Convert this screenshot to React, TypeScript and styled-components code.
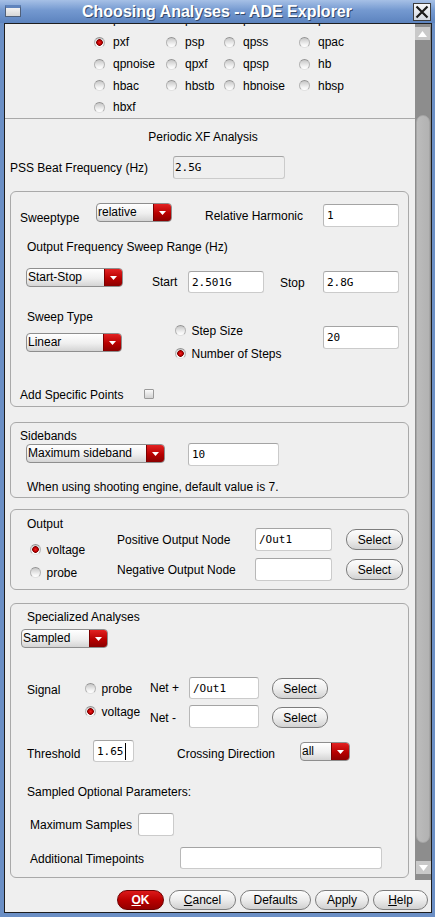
import { createGlobalStyle, styled } from "styled-components";

const GlobalStyle = createGlobalStyle`
  html, body {
    margin: 0;
    padding: 0;
  }
  body {
    font-family: "Liberation Sans", Arial, sans-serif;
    font-size: 12px;
    color: #000;
    background: #6a8ec4;
  }
`;

type Pos = { $w?: number; $mt?: number; $ml?: number };

const Window = styled.div`
  width: 435px;
  height: 917px;
  display: flex;
  flex-direction: column;
  background: #6b8fc5;
  box-sizing: border-box;
`;

const TitleBar = styled.div`
  height: 23px;
  flex-shrink: 0;
  display: flex;
  align-items: center;
  padding: 0 4px 0 5px;
  background: linear-gradient(#a6c0e6 0%, #7499d0 45%, #5c83be 100%);
`;

const TitleIcon = styled.div`
  width: 16px;
  height: 12px;
  box-sizing: border-box;
  border: 1px solid #50607a;
  border-top: 3px solid #5f84bd;
  background: linear-gradient(#f2f2f2, #d6d6d6);
  margin-top: -1px;
`;

const TitleText = styled.div`
  flex: 1;
  text-align: center;
  color: #fff;
  font-weight: bold;
  font-size: 16px;
  text-shadow: 1px 1px 0 #34496b;
  white-space: nowrap;
`;

const CloseButton = styled.div`
  width: 18px;
  height: 18px;
  box-sizing: border-box;
  border: 1px solid #3c3c3c;
  background: linear-gradient(#f6f7f9, #d3d9e2);
  display: flex;
  align-items: center;
  justify-content: center;
`;

const Body = styled.div`
  flex: 1;
  margin: 0 3px 4px 4px;
  border: 1px solid #1e1e1e;
  background: #efefef;
  display: flex;
  flex-direction: column;
  overflow: hidden;
`;

const Main = styled.div`
  height: 856px;
  flex-shrink: 0;
  display: flex;
`;

const ScrollArea = styled.div`
  flex: 1;
  overflow: hidden;
`;

const Scrollbar = styled.div`
  width: 16px;
  flex-shrink: 0;
  display: flex;
  flex-direction: column;
  background: #8d8d8d;
`;

const ScrollButton = styled.div<{ $top?: boolean }>`
  height: 13px;
  margin: ${(p) => (p.$top ? "3px 1px 0 0" : "auto 0 6px 1px")};
  background: #c9c9c9;
  display: flex;
  align-items: center;
  justify-content: center;
`;

const Thumb = styled.div`
  height: 728px;
  margin: 75px 1px 0 1px;
  box-sizing: border-box;
  border: 1px solid #a6a6a6;
  border-radius: 7px;
  background: linear-gradient(90deg, #bcbcbc, #b2b2b2);
`;

const ButtonBar = styled.div`
  flex: 1;
  display: flex;
  justify-content: flex-end;
  align-items: flex-start;
  gap: 4px;
  padding: 10px 3px 0 0;
`;

const DialogButton = styled.div<{ $w: number; $primary?: boolean }>`
  box-sizing: border-box;
  width: ${(p) => p.$w}px;
  height: 20px;
  margin-left: ${(p) => (p.$primary ? 0 : 0)}px;
  margin-right: ${(p) => (p.$primary ? 1 : 0)}px;
  display: flex;
  align-items: center;
  justify-content: center;
  border-radius: 10px;
  border: 1px solid ${(p) => (p.$primary ? "#6e0000" : "#7c7c7c")};
  background: ${(p) =>
    p.$primary
      ? "linear-gradient(#dc1a1a, #bb0000 50%, #930000)"
      : "linear-gradient(#fdfdfd, #ececec 50%, #d0d0d0)"};
  color: ${(p) => (p.$primary ? "#fff" : "#000")};
  font-weight: ${(p) => (p.$primary ? "bold" : "normal")};
  font-size: 12px;
`;

const RadioGrid = styled.div`
  display: grid;
  grid-template-columns: 72px 58px 75px 1fr;
  grid-template-rows: 26px;
  grid-auto-rows: 21.7px;
  align-items: center;
  margin-top: -18.5px;
  padding-left: 88.5px;
`;

const RadioItem = styled.div<{ $h?: number; $ml?: number; $gap: number }>`
  display: flex;
  align-items: center;
  height: ${(p) => (p.$h ? `${p.$h}px` : "auto")};
  padding-left: ${(p) => p.$ml ?? 0}px;
  gap: ${(p) => p.$gap}px;
  white-space: nowrap;
`;

const RadioDot = styled.span<{ $on?: boolean }>`
  width: 11px;
  height: 11px;
  flex-shrink: 0;
  box-sizing: border-box;
  border-radius: 50%;
  border: 1px solid #b4b4b4;
  border-top-color: #939393;
  border-bottom-color: #e2e2e2;
  background: ${(p) =>
    p.$on
      ? "radial-gradient(circle at 50% 50%, #f02020 0, #c00000 2px, #7c0000 3px, rgba(0,0,0,0) 3.6px), linear-gradient(#c6c6c6, #f4f4f4 70%, #ffffff)"
      : "linear-gradient(#c6c6c6, #f4f4f4 70%, #ffffff)"};
`;

const Separator = styled.div`
  height: 1px;
  background: #a9a9a9;
`;

const Heading = styled.div`
  margin-top: 11px;
  line-height: 14px;
  text-align: center;
  padding-right: 14px;
`;

const Caption = styled.div<{ $mt?: number; $pl?: number; $lh?: number }>`
  margin-top: ${(p) => p.$mt ?? 0}px;
  padding-left: ${(p) => p.$pl ?? 0}px;
  line-height: ${(p) => p.$lh ?? 14}px;
  white-space: nowrap;
`;

const Row = styled.div<{ $mt?: number; $pl?: number }>`
  display: flex;
  align-items: flex-start;
  margin-top: ${(p) => p.$mt ?? 0}px;
  padding-left: ${(p) => p.$pl ?? 0}px;
`;

const Column = styled.div<Pos>`
  display: flex;
  flex-direction: column;
  align-items: flex-start;
  flex-shrink: 0;
  width: ${(p) => (p.$w ? `${p.$w}px` : "auto")};
  margin-top: ${(p) => p.$mt ?? 0}px;
`;

const Label = styled.span<Pos>`
  display: block;
  flex-shrink: 0;
  width: ${(p) => (p.$w ? `${p.$w}px` : "auto")};
  margin-top: ${(p) => p.$mt ?? 0}px;
  margin-left: ${(p) => p.$ml ?? 0}px;
  line-height: 14px;
  white-space: nowrap;
`;

const FieldBox = styled.div<Pos & { $h: number; $off?: boolean }>`
  box-sizing: border-box;
  flex-shrink: 0;
  width: ${(p) => p.$w}px;
  height: ${(p) => p.$h}px;
  margin-top: ${(p) => p.$mt ?? 0}px;
  margin-left: ${(p) => p.$ml ?? 0}px;
  display: flex;
  align-items: center;
  padding-left: ${(p) => (p.$off ? 1 : 3)}px;
  font-family: "DejaVu Sans Mono", "Liberation Mono", monospace;
  font-size: 11px;
  background: ${(p) => (p.$off ? "#efefef" : "#ffffff")};
  border: 1px solid #cbcbcb;
  border-top-color: #a4a4a4;
  border-left-color: #b8b8b8;
  border-radius: 3px;
`;

const Caret = styled.span`
  width: 1px;
  height: 17px;
  margin-left: 1px;
  background: #000;
`;

const ComboBox = styled.div<Pos>`
  box-sizing: border-box;
  flex-shrink: 0;
  width: ${(p) => p.$w}px;
  height: 19px;
  margin-top: ${(p) => p.$mt ?? 0}px;
  margin-left: ${(p) => p.$ml ?? 0}px;
  display: flex;
  align-items: stretch;
  border: 1px solid #8e8e8e;
  border-radius: 4px;
  background: linear-gradient(#ffffff, #efefef 55%, #d4d4d4);
  overflow: hidden;
`;

const ComboText = styled.span`
  flex: 1;
  padding-left: 1px;
  line-height: 16px;
  white-space: nowrap;
  overflow: hidden;
`;

const ComboArrow = styled.span`
  width: 17px;
  flex-shrink: 0;
  display: flex;
  align-items: center;
  justify-content: center;
  background: linear-gradient(#e22222, #b80000 55%, #8a0000);
  border-left: 1px solid #7a0000;
`;

const PillButton = styled.div<Pos>`
  box-sizing: border-box;
  flex-shrink: 0;
  width: ${(p) => p.$w}px;
  height: 21px;
  margin-top: ${(p) => p.$mt ?? 0}px;
  margin-left: ${(p) => p.$ml ?? 0}px;
  display: flex;
  align-items: center;
  justify-content: center;
  border: 1px solid #7c7c7c;
  border-radius: 10px;
  background: linear-gradient(#fdfdfd, #eeeeee 50%, #d2d2d2);
`;

const CheckBox = styled.span<Pos>`
  display: block;
  flex-shrink: 0;
  width: 10px;
  height: 10px;
  box-sizing: border-box;
  margin-top: ${(p) => p.$mt ?? 0}px;
  border: 1px solid #9a9a9a;
  border-radius: 1px;
  background: linear-gradient(#fafafa, #d2d2d2);
`;

const Group = styled.div<{ $mt: number; $pt: number; $pb: number }>`
  margin: ${(p) => p.$mt}px 6px 0 5px;
  padding: ${(p) => p.$pt}px 0 ${(p) => p.$pb}px 0;
  border: 1px solid #a9a9a9;
  border-radius: 6px;
`;

function Combo({ label, w, mt, ml }: { label: string; w: number; mt?: number; ml?: number }) {
  return (
    <ComboBox $w={w} $mt={mt} $ml={ml}>
      <ComboText>{label}</ComboText>
      <ComboArrow>
        <svg width="7" height="4" viewBox="0 0 7 4">
          <path d="M0 0H7L3.5 4Z" fill="#fff" />
        </svg>
      </ComboArrow>
    </ComboBox>
  );
}

function Radio({ label, on, gap = 6, h, ml }: { label: string; on?: boolean; gap?: number; h?: number; ml?: number }) {
  return (
    <RadioItem $gap={gap} $h={h} $ml={ml}>
      <RadioDot $on={on} />
      <span>{label}</span>
    </RadioItem>
  );
}

const analyses = [
  "pss", "pac", "pstb", "pnoise",
  "pxf", "psp", "qpss", "qpac",
  "qpnoise", "qpxf", "qpsp", "hb",
  "hbac", "hbstb", "hbnoise", "hbsp",
  "hbxf",
];

function ArrowIcon({ up }: { up?: boolean }) {
  return (
    <svg width="9" height="6" viewBox="0 0 9 6">
      <path d={up ? "M0 6H9L4.5 0Z" : "M0 0H9L4.5 6Z"} fill="#fff" />
    </svg>
  );
}

export default function App() {
  return (
    <>
      <GlobalStyle />
      <Window>
        <TitleBar>
          <TitleIcon />
          <TitleText>Choosing Analyses -- ADE Explorer</TitleText>
          <CloseButton>
            <svg width="14" height="14" viewBox="0 0 14 14">
              <path d="M1.5 1.5L12.5 12.5M12.5 1.5L1.5 12.5" stroke="#1a1a1a" strokeWidth="2.2" />
            </svg>
          </CloseButton>
        </TitleBar>
        <Body>
          <Main>
            <ScrollArea>
              <RadioGrid>
                {analyses.map((a) => (
                  <Radio key={a} label={a} on={a === "pxf"} gap={8.5} />
                ))}
              </RadioGrid>
              <Separator />
              <Heading>Periodic XF Analysis</Heading>
              <Row $mt={12} $pl={5}>
                <Label $w={163} $mt={5}>PSS Beat Frequency (Hz)</Label>
                <FieldBox $w={112} $h={23} $off>2.5G</FieldBox>
              </Row>

              <Group $mt={12} $pt={11} $pb={4}>
                <Row $pl={9}>
                  <Label $w={76} $mt={8}>Sweeptype</Label>
                  <Combo label="relative" w={76} />
                  <Label $ml={33} $w={118} $mt={6}>Relative Harmonic</Label>
                  <FieldBox $w={76} $h={23} $mt={1}>1</FieldBox>
                </Row>
                <Caption $mt={13} $pl={16}>Output Frequency Sweep Range (Hz)</Caption>
                <Row $mt={14} $pl={15}>
                  <Combo label="Start-Stop" w={97} />
                  <Label $ml={29} $w={36} $mt={7}>Start</Label>
                  <FieldBox $w={76} $h={22} $mt={3}>2.501G</FieldBox>
                  <Label $ml={16} $w={43} $mt={8}>Stop</Label>
                  <FieldBox $w={76} $h={22} $mt={3}>2.8G</FieldBox>
                </Row>
                <Row $mt={17} $pl={15}>
                  <Column $w={148.5}>
                    <Caption $pl={1}>Sweep Type</Caption>
                    <Combo label="Linear" w={96} mt={9} />
                  </Column>
                  <Column $w={148.5} $mt={9}>
                    <Radio label="Step Size" h={23} />
                    <Radio label="Number of Steps" on h={23} />
                  </Column>
                  <FieldBox $w={76} $h={23} $mt={16}>20</FieldBox>
                </Row>
                <Row $mt={23} $pl={9}>
                  <Label $w={124}>Add Specific Points</Label>
                  <CheckBox $mt={1} />
                </Row>
              </Group>

              <Group $mt={15} $pt={7} $pb={3}>
                <Caption $pl={9} $lh={13}>Sidebands</Caption>
                <Row $pl={15}>
                  <Combo label="Maximum sideband" w={139} mt={1} />
                  <FieldBox $w={91} $h={23} $ml={23}>10</FieldBox>
                </Row>
                <Caption $mt={14} $pl={16}>When using shooting engine, default value is 7.</Caption>
              </Group>

              <Group $mt={11} $pt={0} $pb={5}>
                <Row $pl={16}>
                  <Column $w={90}>
                    <Label $mt={7}>Output</Label>
                    <Column $mt={7}>
                      <Radio label="voltage" on h={23} ml={2.5} />
                      <Radio label="probe" h={23} ml={2.5} />
                    </Column>
                  </Column>
                  <Column $mt={18}>
                    <Row>
                      <Label $w={138} $mt={5}>Positive Output Node</Label>
                      <FieldBox $w={77} $h={23}>/Out1</FieldBox>
                      <PillButton $w={57} $ml={14} $mt={1}>Select</PillButton>
                    </Row>
                    <Row $mt={7}>
                      <Label $w={138} $mt={5}>Negative Output Node</Label>
                      <FieldBox $w={77} $h={23} />
                      <PillButton $w={57} $ml={14} $mt={1}>Select</PillButton>
                    </Row>
                  </Column>
                </Row>
              </Group>

              <Group $mt={13} $pt={6} $pb={8}>
                <Caption $pl={16}>Specialized Analyses</Caption>
                <Row $pl={10}>
                  <Combo label="Sampled" w={87} mt={5} />
                </Row>
                <Row $mt={29} $pl={16}>
                  <Label $w={57.5} $mt={6}>Signal</Label>
                  <Column $w={65.5}>
                    <Radio label="probe" h={23} />
                    <Radio label="voltage" on h={23} />
                  </Column>
                  <Column>
                    <Row>
                      <Label $w={39} $mt={4}>Net +</Label>
                      <FieldBox $w={70} $h={22}>/Out1</FieldBox>
                      <PillButton $w={56} $ml={13} $mt={1}>Select</PillButton>
                    </Row>
                    <Row $mt={6}>
                      <Label $w={39} $mt={6}>Net -</Label>
                      <FieldBox $w={70} $h={23} />
                      <PillButton $w={56} $ml={13} $mt={2}>Select</PillButton>
                    </Row>
                  </Column>
                </Row>
                <Row $mt={12} $pl={16}>
                  <Label $w={66} $mt={7}>Threshold</Label>
                  <FieldBox $w={41} $h={22} $off={false}>
                    1.65
                    <Caret />
                  </FieldBox>
                  <Label $ml={43} $w={123} $mt={7}>Crossing Direction</Label>
                  <Combo label="all" w={50} mt={2} />
                </Row>
                <Caption $mt={23} $pl={16}>Sampled Optional Parameters:</Caption>
                <Row $mt={14} $pl={19}>
                  <Label $w={108} $mt={5}>Maximum Samples</Label>
                  <FieldBox $w={36} $h={23} />
                </Row>
                <Row $mt={11} $pl={19}>
                  <Label $w={150} $mt={5}>Additional Timepoints</Label>
                  <FieldBox $w={202} $h={22} />
                </Row>
              </Group>
            </ScrollArea>
            <Scrollbar>
              <ScrollButton $top>
                <ArrowIcon up />
              </ScrollButton>
              <Thumb />
              <ScrollButton>
                <ArrowIcon />
              </ScrollButton>
            </Scrollbar>
          </Main>
          <ButtonBar>
            <DialogButton $w={47} $primary>
              <span><u>O</u>K</span>
            </DialogButton>
            <DialogButton $w={67}>
              <span><u>C</u>ancel</span>
            </DialogButton>
            <DialogButton $w={71}>Defaults</DialogButton>
            <DialogButton $w={54}>Apply</DialogButton>
            <DialogButton $w={55}>
              <span><u>H</u>elp</span>
            </DialogButton>
          </ButtonBar>
        </Body>
      </Window>
    </>
  );
}
